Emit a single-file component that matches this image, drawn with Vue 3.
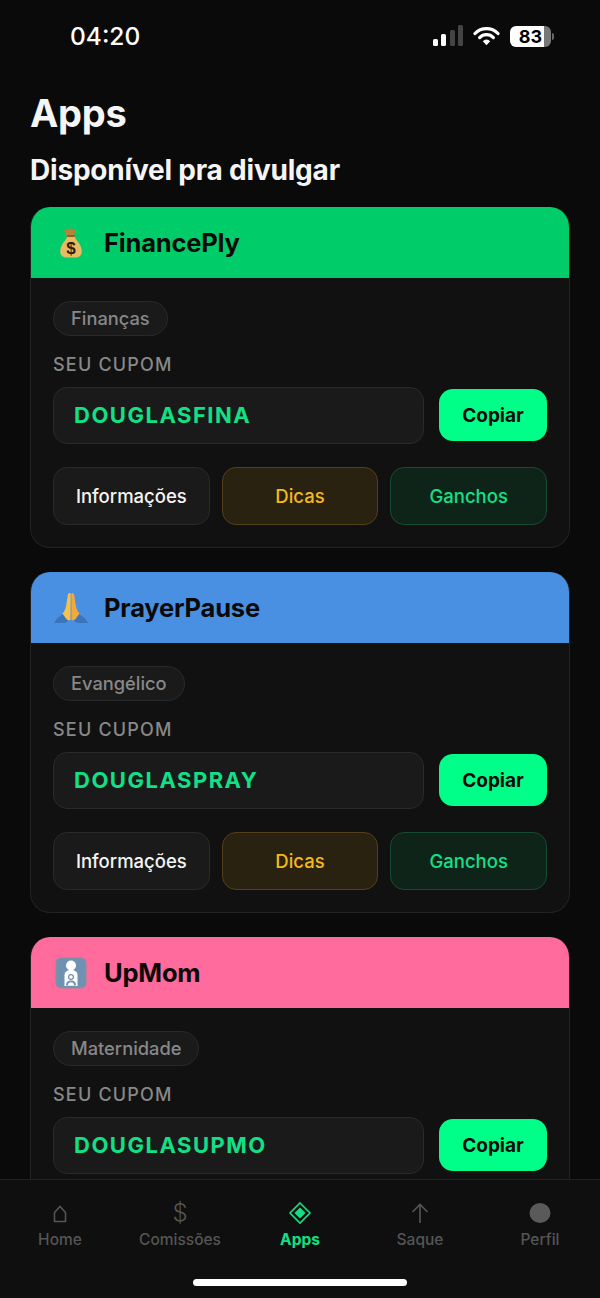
<template>
  <div class="screen">
    <div class="status-bar">
      <span class="time">04:20</span>
      <div class="status-icons">
        <svg width="31" height="22" viewBox="0 0 31 22">
          <rect x="1" y="14" width="5" height="7" rx="1.500" fill="#fff" />
          <rect x="9" y="9" width="5" height="12" rx="1.500" fill="#fff" />
          <rect x="18" y="5" width="5" height="16" rx="1.500" fill="#444" />
          <rect x="26" y="0" width="5" height="21" rx="1.500" fill="#444" />
        </svg>
        <svg width="27" height="20" viewBox="0 0 27 20">
          <path d="M2 7.500a16 16 0 0 1 23 0" fill="none" stroke="#fff" stroke-width="3.200" stroke-linecap="round" />
          <path d="M6.600 11.600a9.600 9.600 0 0 1 13.800 0" fill="none" stroke="#fff" stroke-width="3.200" stroke-linecap="round" />
          <path d="M9.800 15.200l3.700 4 3.700-4a5 5 0 0 0-7.400 0z" fill="#fff" />
        </svg>
        <div class="battery">
          <div class="battery-body">83</div>
          <div class="battery-tip"></div>
        </div>
      </div>
    </div>

    <main class="content">
      <h1 class="page-title">Apps</h1>
      <h2 class="section-title">Disponível pra divulgar</h2>

      <section v-for="app in apps" :key="app.name" class="card">
        <header class="card-header" :style="{ background: app.color }">
          <span class="emoji">
            <svg v-if="app.icon === 'bag'" width="32" height="32" viewBox="0 0 32 32">
              <path d="M10.500 2.500c1.500.8 2.500.2 3.200-.7.8-.8 1.800-.8 2.600 0 .7.900 1.700 1.500 3.200.7.900-.4 1.400.2 1.100 1.100l-2 5.900h-7.200l-2-5.900c-.3-.9.200-1.500 1.100-1.100z" fill="#b8823a" />
              <path d="M12.300 9h7.400c.5 3 2.400 4.500 4.200 7 1.900 2.800 2.900 5.500 2.900 8.200 0 4-2.500 6.300-5.800 6.300H11c-3.300 0-5.800-2.300-5.800-6.300 0-2.700 1-5.400 2.900-8.200 1.800-2.500 3.700-4 4.200-7z" fill="#e6bb62" />
              <rect x="11.800" y="8" width="8.400" height="2" rx="1" fill="#8f6128" />
              <text x="16" y="27" text-anchor="middle" class="bag-dollar">$</text>
            </svg>
            <svg v-else-if="app.icon === 'hands'" width="36" height="32" viewBox="0 0 36 32">
              <path d="M1 31c2.500-5 6.500-8 10.500-9.500l4 6.500c-1 1.700-2.800 3-5 3z" fill="#3a74bd" />
              <path d="M35 31c-2.500-5-6.500-8-10.500-9.500l-4 6.500c1 1.700 2.800 3 5 3z" fill="#3a74bd" />
              <path d="M15 2c1-1.300 2.600-1.300 2.700 0l-.2 26c-2 .8-3.500 0-4.500-1.500l-3.500-5c1.800-2 3-4 3.600-7.500z" fill="#f7c24a" />
              <path d="M21 2c-1-1.300-2.600-1.300-2.700 0l.2 26c2 .8 3.500 0 4.500-1.500l3.500-5c-1.800-2-3-4-3.600-7.500z" fill="#f2a93a" />
            </svg>
            <svg v-else width="32" height="32" viewBox="0 0 32 32">
              <rect x="1" y="1" width="30" height="30" rx="5" fill="#6f91b2" stroke="#8b8f9a" />
              <circle cx="16" cy="8.500" r="5" fill="#fff" />
              <path d="M9.500 29v-11c0-3 2.500-5 6.500-5s6.500 2 6.500 5v11z" fill="#fff" />
              <circle cx="16" cy="20" r="3" fill="#6f91b2" />
              <path d="M11 28.500c0-3.500 2-5 5-5s5 1.500 5 5z" fill="#6f91b2" />
              <circle cx="16" cy="20" r="1.800" fill="#fff" />
              <path d="M13 28.500c0-2 1.200-3.200 3-3.200s3 1.200 3 3.200z" fill="#fff" />
            </svg>
          </span>
          <span class="app-name">{{ app.name }}</span>
        </header>

        <div class="card-body">
          <span class="chip">{{ app.category }}</span>
          <p class="coupon-label">SEU CUPOM</p>
          <div class="coupon-row">
            <div class="coupon-code">{{ app.coupon }}</div>
            <button class="copy-btn">Copiar</button>
          </div>
          <div v-if="app.showActions" class="actions">
            <button class="action">Informações</button>
            <button class="action action-tips">Dicas</button>
            <button class="action action-hooks">Ganchos</button>
          </div>
        </div>
      </section>
    </main>

    <nav class="tab-bar">
      <div class="tabs">
        <div class="tab">
          <svg class="tab-icon" width="24" height="26" viewBox="0 0 24 26">
            <path d="M6.500 21.500v-9L12 6.500l5.500 6v9z" fill="none" stroke="#555" stroke-width="1.600" />
          </svg>
          <span>Home</span>
        </div>
        <div class="tab">
          <span class="tab-icon dollar">$</span>
          <span>Comissões</span>
        </div>
        <div class="tab active">
          <svg class="tab-icon" width="24" height="26" viewBox="0 0 24 26">
            <path d="M12 3l10 10-10 10L2 13z" fill="none" stroke="#12e086" stroke-width="1.600" />
            <path d="M12 7.500l5.500 5.500-5.500 5.500L6.500 13z" fill="#12e086" />
          </svg>
          <span>Apps</span>
        </div>
        <div class="tab">
          <svg class="tab-icon" width="24" height="26" viewBox="0 0 24 26">
            <path d="M12 23V4.500M4.500 12L12 4.500l7.500 7.500" fill="none" stroke="#555" stroke-width="1.600" />
          </svg>
          <span>Saque</span>
        </div>
        <div class="tab">
          <svg class="tab-icon" width="24" height="26" viewBox="0 0 24 26">
            <ellipse cx="12" cy="13" rx="10.500" ry="10" fill="#5a5a5a" />
          </svg>
          <span>Perfil</span>
        </div>
      </div>
      <div class="home-indicator"></div>
    </nav>
  </div>
</template>

<script setup>
const apps = [
  { name: "FinancePly", icon: "bag", color: "#00cc6a", category: "Finanças", coupon: "DOUGLASFINA", showActions: true },
  { name: "PrayerPause", icon: "hands", color: "#4a90e2", category: "Evangélico", coupon: "DOUGLASPRAY", showActions: true },
  // the last card runs under the tab bar, its buttons are out of view
  { name: "UpMom", icon: "frame", color: "#ff6b9d", category: "Maternidade", coupon: "DOUGLASUPMO", showActions: false },
];
</script>

<style>
body {
  background: #0a0a0a;
}
</style>

<style scoped>
.screen {
  display: flex;
  flex-direction: column;
  height: 1298px;
  overflow: hidden;
  background: #0a0a0a;
  color: #fff;
  font-family: Inter, "Liberation Sans", sans-serif;
}

.status-bar {
  display: flex;
  flex-shrink: 0;
  justify-content: space-between;
  align-items: center;
  height: 72px;
  padding: 0 46px 0 70px;
}

.time {
  font-size: 24.500px;
  font-weight: 500;
}

.status-icons {
  display: flex;
  align-items: center;
  gap: 10px;
}

.battery {
  display: flex;
  align-items: center;
  gap: 1px;
}

.battery-body {
  width: 41px;
  height: 21px;
  border-radius: 6px;
  background: linear-gradient(90deg, #fff 0 83%, #777 83%);
  color: #000;
  font-size: 18px;
  font-weight: 700;
  line-height: 21px;
  text-align: center;
}

.battery-tip {
  width: 2px;
  height: 7px;
  border-radius: 0 2px 2px 0;
  background: #666;
}

.content {
  flex: 1;
  min-height: 0;
  overflow: hidden;
  padding: 16px 30px 0;
}

.page-title {
  margin: 0;
  font-size: 38px;
  font-weight: 700;
  line-height: 50px;
  letter-spacing: -0.3px;
  color: #f5f5f5;
}

.section-title {
  margin: 15px 0 19px;
  font-size: 28px;
  font-weight: 700;
  line-height: 35px;
  letter-spacing: -0.2px;
  color: #f5f5f5;
}

.card {
  margin-bottom: 24px;
  border: 1px solid #222;
  border-top: 0;
  border-radius: 20px;
  background: #111;
  overflow: hidden;
}

.card-header {
  display: flex;
  align-items: center;
  gap: 15px;
  height: 71px;
  margin: 0 -1px;
  padding: 0 23px;
}

.emoji {
  display: flex;
  justify-content: center;
  width: 36px;
}

.bag-dollar {
  font-family: "Liberation Sans", sans-serif;
  font-size: 17px;
  font-weight: 700;
  fill: #2b2010;
}

.app-name {
  font-size: 25.500px;
  font-weight: 700;
  letter-spacing: -0.2px;
  color: #0a0a0a;
}

.card-body {
  padding: 23px 22px 22px;
}

.chip {
  display: inline-block;
  height: 35px;
  padding: 0 17px;
  border: 1px solid #2a2a2a;
  border-radius: 18px;
  background: #1a1a1a;
  color: #888;
  font-size: 18.300px;
  font-weight: 500;
  line-height: 33px;
  box-sizing: border-box;
  vertical-align: top;
}

.coupon-label {
  margin: 17px 0 10px;
  color: #888;
  font-size: 18px;
  font-weight: 500;
  line-height: 24px;
  letter-spacing: 1.200px;
}

.coupon-row {
  display: flex;
  align-items: flex-start;
  gap: 15px;
}

.coupon-code {
  flex: 1;
  height: 57px;
  padding-left: 20px;
  border: 1px solid #2a2a2a;
  border-radius: 14px;
  background: #1a1a1a;
  color: #12e086;
  font-size: 22px;
  font-weight: 700;
  line-height: 55px;
  letter-spacing: 1.500px;
  box-sizing: border-box;
}

.copy-btn {
  width: 108px;
  height: 52px;
  margin-top: 2px;
  border: 0;
  border-radius: 14px;
  background: #00ff88;
  color: #0a0a0a;
  font-family: inherit;
  font-size: 19px;
  font-weight: 700;
}

.actions {
  display: grid;
  grid-template-columns: repeat(3, 1fr);
  gap: 12px;
  margin-top: 23px;
}

.action {
  height: 58px;
  padding: 0;
  border: 1px solid #2a2a2a;
  border-radius: 14px;
  background: #1a1a1a;
  color: #f5f5f5;
  font-family: inherit;
  font-size: 18.500px;
  font-weight: 500;
}

.action-tips {
  border-color: #54401a;
  background: #2a2210;
  color: #f5b81c;
}

.action-hooks {
  border-color: #174a34;
  background: #0f2419;
  color: #14e08a;
}

.tab-bar {
  flex-shrink: 0;
  height: 119px;
  border-top: 1px solid #222;
  background: #0f0f0f;
  box-sizing: border-box;
}

.tabs {
  display: grid;
  grid-template-columns: repeat(5, 1fr);
  padding-top: 20px;
}

.tab {
  display: flex;
  flex-direction: column;
  align-items: center;
  color: #555;
  font-size: 15.500px;
  font-weight: 500;
  line-height: 24px;
}

.tab-icon {
  display: block;
  height: 26px;
  margin-bottom: 2px;
}

.dollar {
  font-size: 24px;
  font-weight: 300;
  line-height: 26px;
}

.active {
  color: #12e086;
  font-weight: 700;
}

.home-indicator {
  width: 214px;
  height: 7px;
  margin: 27px auto 0;
  border-radius: 4px;
  background: #fff;
}
</style>
